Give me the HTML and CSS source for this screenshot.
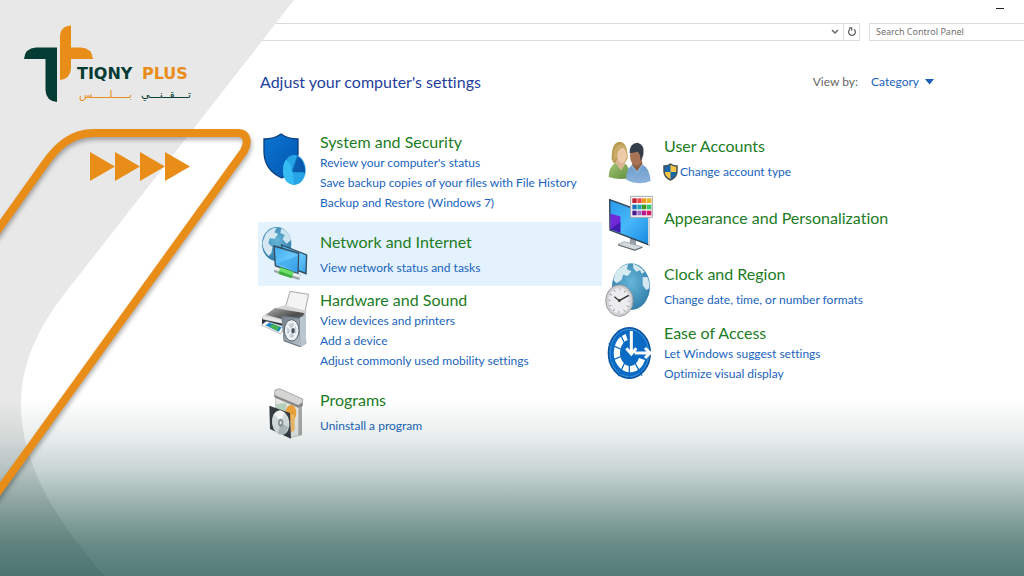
FILE: index.html
```html
<!DOCTYPE html>
<html lang="en">
<head>
<meta charset="utf-8">
<title>Control Panel</title>
<link rel="stylesheet" href="styles.css">
</head>
<body>
<div class="page">
  <header class="titlebar"><button class="minimize" aria-label="Minimize"></button></header>
  <div class="toolbar">
    <div class="address">
      <input class="address-input" type="text" aria-label="Address">
      <button class="tool" aria-label="Previous locations"><svg width="8" height="6" viewBox="0 0 8 6"><path d="M1 1l3 3 3-3" fill="none" stroke="#666" stroke-width="1.5"/></svg></button>
      <button class="tool tool-refresh" aria-label="Refresh"><svg width="10" height="10" viewBox="0 0 10 10"><path d="M7 2.2A3.4 3.4 0 1 1 3 2.2M2 1h2.6v2.8" fill="none" stroke="#666" stroke-width="1.3"/></svg></button>
    </div>
    <input class="search" type="search" placeholder="Search Control Panel" aria-label="Search Control Panel">
  </div>

  <main class="content">
    <div class="head">
      <h1 class="title">Adjust your computer's settings</h1>
      <div class="view">
        <label for="view">View by:</label>
        <span class="view-choice">
          <select id="view" class="view-select"><option>Category</option></select>
          <svg width="9" height="6" viewBox="0 0 9 6"><path d="M0 0h9L4.500 5.500z" fill="#1660b8"/></svg>
        </span>
      </div>
    </div>

    <div class="columns">
      <div class="column column-first">
        <section class="cell cell-tall">
          <svg class="icon" viewBox="0 0 150 180">
            <defs><linearGradient id="sh" x1="0" y1="0" x2="1" y2="1"><stop offset="0" stop-color="#0a74d2"/><stop offset="1" stop-color="#0457ae"/></linearGradient></defs>
            <path d="M69 9Q90 24 120 24V68Q118 120 71 141Q20 118 18 64V24Q48 24 69 9z" fill="url(#sh)" stroke="#0c3f80" stroke-width="4"/>
            <ellipse cx="109" cy="117" rx="34" ry="45" fill="#25a5e6"/>
            <path d="M84 86Q108 104 107 161Q75 158 75 117Q75 98 84 86z" fill="#35bdf3"/>
            <path d="M107 110L117 76Q140 86 142 126z" fill="#0757a8"/>
            <path d="M100 120L117 76L131 122z" fill="#1685d4"/>
            <path d="M103 124L117 80L138 124z" fill="#0a5cae"/>
          </svg>
          <div class="info">
            <h2 class="name"><a href="#system">System and Security</a></h2>
            <ul class="links">
              <li><a href="#status">Review your computer's status</a></li>
              <li><a href="#history">Save backup copies of your files with File History</a></li>
              <li><a href="#backup">Backup and Restore (Windows 7)</a></li>
            </ul>
          </div>
        </section>

        <section class="cell cell-active">
          <svg class="icon" viewBox="0 0 150 180">
            <defs>
              <radialGradient id="gl" cx=".5" cy=".4" r=".6"><stop offset="0" stop-color="#68b5da"/><stop offset="1" stop-color="#317fa9"/></radialGradient>
              <linearGradient id="scr" x1="0" y1="0" x2="1" y2="1"><stop offset="0" stop-color="#3fa9ee"/><stop offset=".55" stop-color="#68c8fb"/><stop offset="1" stop-color="#36a0e8"/></linearGradient>
            </defs>
            <ellipse cx="56" cy="60" rx="44" ry="51" fill="url(#gl)"/>
            <path d="M22 32Q35 12 56 11L49 25L60 30L50 44L35 43L31 58L43 69L40 88L32 96Q15 80 13 56z" fill="#d5e8f2"/>
            <path d="M70 13Q92 21 99 48L86 59L74 46L80 33L67 27z" fill="#cbe3ef"/>
            <path d="M71 63L146 93L144 149L76 122z" fill="url(#scr)" stroke="#344b5d" stroke-width="4"/>
            <path d="M48 66L122 88L120 149L52 125z" fill="url(#scr)" stroke="#344b5d" stroke-width="4"/>
            <path d="M55 119L118 96V143z" fill="#2d9ce4" opacity=".5"/>
            <path d="M50 136l76 24" stroke="#9aa5a8" stroke-width="17"/><path d="M50 133l76 24" stroke="#e9eeee" stroke-width="9"/>
            <path d="M65 140l39 13" stroke="#3fae40" stroke-width="21"/><path d="M65 136l39 13" stroke="#6ce06b" stroke-width="11"/>
          </svg>
          <div class="info info-loose">
            <h2 class="name"><a href="#network">Network and Internet</a></h2>
            <ul class="links"><li><a href="#tasks">View network status and tasks</a></li></ul>
          </div>
        </section>

        <section class="cell cell-tall">
          <svg class="icon" viewBox="0 0 150 180">
            <defs>
              <linearGradient id="metal" x1="0" y1="0" x2="1" y2="1"><stop offset="0" stop-color="#737f8b"/><stop offset="1" stop-color="#b5bfc8"/></linearGradient>
              <linearGradient id="top" x1="0" y1="0" x2="1" y2="1"><stop offset="0" stop-color="#b2b2b2"/><stop offset=".6" stop-color="#4a4a4c"/><stop offset="1" stop-color="#858588"/></linearGradient>
            </defs>
            <path d="M96 7L152 16L141 67L83 52z" fill="#f3f3f3" stroke="#a9a9a9" stroke-width="3"/>
            <path d="M15 80L54 57L78 49L146 67L139 100L75 128L12 104z" fill="#d4d4d5"/>
            <path d="M24 77L51 57L141 73L116 102z" fill="url(#top)"/>
            <path d="M12 84L88 103L81 127L12 106z" fill="#28333d"/>
            <path d="M13 80L92 99V108L13 91z" fill="#e9e9ea"/>
            <path d="M10 108L25 97L81 113L68 135z" fill="#f8faf9" stroke="#999" stroke-width="2"/>
            <path d="M22 109l12-8 37 14-9 13z" fill="#1884ca"/><path d="M34 112l13-6 18 8-8 11z" fill="#46b34b"/>
            <path d="M70 79L125 86L140 78L145 163L127 175L77 157z" fill="#66717c"/>
            <path d="M125 86L144 78V163L127 175z" fill="#b9c6d0"/>
            <path d="M71 82L123 89L127 171L77 154z" fill="url(#metal)"/>
            <ellipse cx="101" cy="124" rx="22" ry="32" fill="#edf1f3" stroke="#57626c" stroke-width="3"/>
            <ellipse cx="101" cy="124" rx="14" ry="22" fill="#c5ced5"/><path d="M89 110l24 30M113 105L90 142" stroke="#f5f7f8" stroke-width="5"/><ellipse cx="105" cy="125" rx="5" ry="8" fill="#45505b"/>
          </svg>
          <div class="info">
            <h2 class="name"><a href="#hardware">Hardware and Sound</a></h2>
            <ul class="links">
              <li><a href="#devices">View devices and printers</a></li>
              <li><a href="#add">Add a device</a></li>
              <li><a href="#mobility">Adjust commonly used mobility settings</a></li>
            </ul>
          </div>
        </section>

        <section class="cell">
          <svg class="icon" viewBox="0 0 150 180">
            <path d="M53 35L130 67V159L98 166L53 140z" fill="#e7e7e5" stroke="#b1b1af" stroke-width="2"/>
            <path d="M121 69L132 65V158L121 161z" fill="#aaa9a7"/>
            <path d="M51 24L65 20L134 51L133 72L120 73L49 43z" fill="#d5d5d4" stroke="#8b8b8b" stroke-width="2"/>
            <path d="M50 39L121 69L133 61V73L120 77L49 46z" fill="#8a8a8a"/>
            <path d="M52 67L85 62V103L56 96z" fill="#b9d2bf"/>
            <ellipse cx="99" cy="93" rx="16" ry="24" fill="#efa238"/><path d="M98 98V154L110 143V98z" fill="#f3ba65"/>
            <path d="M34 71L96 93L99 170L36 141z" fill="#363b40"/>
            <ellipse cx="68" cy="122" rx="26" ry="37" transform="rotate(-9 68 122)" fill="#dce0e2"/>
            <path d="M68 122L50 95L66 85L79 91z" fill="#fff"/><path d="M68 122L60 156L79 157L91 135z" fill="#b6bdc1"/>
            <ellipse cx="68" cy="122" rx="8" ry="12" fill="#8c979d"/><ellipse cx="68" cy="122" rx="3" ry="5" fill="#eee"/>
          </svg>
          <div class="info info-loose">
            <h2 class="name"><a href="#programs">Programs</a></h2>
            <ul class="links"><li><a href="#uninstall">Uninstall a program</a></li></ul>
          </div>
        </section>
      </div>

      <div class="column">
        <section class="cell">
          <svg class="icon" viewBox="0 0 150 180">
            <defs>
              <linearGradient id="gr" x1="0" y1="0" x2="1" y2="1"><stop offset="0" stop-color="#a4c673"/><stop offset="1" stop-color="#608d3d"/></linearGradient>
              <linearGradient id="bl" x1="0" y1="0" x2="0" y2="1"><stop offset="0" stop-color="#6a9bcb"/><stop offset="1" stop-color="#8db3dc"/></linearGradient>
            </defs>
            <path d="M29 94Q28 43 53 41Q77 43 77 91L68 106H35z" fill="#b99a51"/>
            <path d="M47 88h19l3 24-17 20-14-20z" fill="#dbb493"/>
            <ellipse cx="60" cy="80" rx="15" ry="25" fill="#edcaaa"/>
            <path d="M36 99Q29 55 57 49Q78 55 75 84Q71 62 63 59Q45 63 45 86z" fill="#c9ad67"/>
            <path d="M20 147Q20 116 40 105L57 127L70 107Q82 114 83 150Q51 158 20 147z" fill="url(#gr)"/>
            <path d="M93 100h27l3 20-18 17-17-20z" fill="#8a5e43"/>
            <ellipse cx="103" cy="83" rx="19" ry="30" fill="#a87354"/>
            <path d="M83 75Q82 45 107 44Q129 49 124 81L115 100Q117 77 106 71Q89 76 83 75z" fill="#333e48"/>
            <path d="M73 155Q71 124 90 112L105 133L121 110Q143 119 146 159Q107 174 73 155z" fill="url(#bl)"/>
            <path d="M89 112l16 21 16-22" fill="none" stroke="#8fb4da" stroke-width="4"/>
          </svg>
          <div class="info info-loose">
            <h2 class="name"><a href="#users">User Accounts</a></h2>
            <ul class="links"><li><a class="shielded" href="#account"><svg class="shield" viewBox="0 0 15 18"><path d="M7.500 1Q10 3 14 3V8Q14 14 7.500 17Q1 14 1 8V3Q5 3 7.500 1z" fill="#f6c647"/><path d="M7.500 1V9H1V3Q5 3 7.500 1zM7.500 9H14Q14 14 7.500 17z" fill="#1868ad"/><path d="M7.500 1Q10 3 14 3V8Q14 14 7.500 17Q1 14 1 8V3Q5 3 7.500 1z" fill="none" stroke="#44515a" stroke-width="1.500"/></svg>Change account type</a></li></ul>
          </div>
        </section>

        <section class="cell">
          <svg class="icon" viewBox="0 0 150 180">
            <defs><linearGradient id="desk" x1="0" y1="0" x2="1" y2="1"><stop offset="0" stop-color="#2798ec"/><stop offset=".5" stop-color="#48b7f8"/><stop offset="1" stop-color="#168ae2"/></linearGradient></defs>
            <path d="M85 132L102 140V160H82z" fill="#98a1aa"/><path d="M48 157L67 149L121 165L98 176z" fill="#d4d9dd" stroke="#8b949b" stroke-width="2"/><path d="M48 159L98 174L121 166" fill="none" stroke="#59636b" stroke-width="3"/>
            <path d="M23 23L140 66V158L24 114z" fill="url(#desk)" stroke="#34414e" stroke-width="4"/>
            <path d="M25 65L55 73V122L25 111z" fill="#7227d8"/><path d="M25 112L55 89V122z" fill="#421cb1"/>
            <path d="M138 66l5-1v92l-5 2z" fill="#d3dbe1"/>
            <path d="M86 13H151V76H86z" fill="#fafafa" stroke="#a8a8a8" stroke-width="3"/>
            <g stroke-width="14"><path d="M91 26h13" stroke="#bf1d30"/><path d="M106 26h13" stroke="#e84c4c"/><path d="M120 26h13" stroke="#ef981e"/><path d="M135 26h13" stroke="#e7b524"/><path d="M91 45h13" stroke="#1672ba"/><path d="M106 45h13" stroke="#22a5b4"/><path d="M120 45h13" stroke="#46951c"/><path d="M135 45h13" stroke="#36c774"/><path d="M91 63h13" stroke="#471c92"/><path d="M106 63h13" stroke="#9870c0"/><path d="M120 63h13" stroke="#bb168c"/><path d="M135 63h13" stroke="#d61b62"/></g>
          </svg>
          <div class="info info-single"><h2 class="name"><a href="#appearance">Appearance and Personalization</a></h2></div>
        </section>

        <section class="cell">
          <svg class="icon" viewBox="0 0 150 180">
            <ellipse cx="87" cy="92" rx="57" ry="70" fill="url(#gl)"/>
            <path d="M39 55Q52 30 78 24L75 40L88 46L77 60L64 56L58 73L43 82L34 72z" fill="#d7e9f1"/>
            <path d="M93 23Q117 31 128 48L119 53L114 43L103 47L94 37zM122 64l14-1q8 17 6 34l-9 5-11-14z" fill="#d5e8f1"/>
            <ellipse cx="52" cy="134" rx="41" ry="47" fill="#cfd0d2" stroke="#9c9fa2" stroke-width="3"/><ellipse cx="52" cy="134" rx="34" ry="40" fill="#ececee" stroke="#c4c6c8" stroke-width="2"/>
            <ellipse cx="52" cy="134" rx="29" ry="34" fill="none" stroke="#777" stroke-width="6" stroke-dasharray="2 14.500"/>
            <path d="M37 122L52 134L80 118" fill="none" stroke="#333" stroke-width="4"/><circle cx="52" cy="134" r="4" fill="#333"/>
          </svg>
          <div class="info info-loose">
            <h2 class="name"><a href="#clock">Clock and Region</a></h2>
            <ul class="links"><li><a href="#formats">Change date, time, or number formats</a></li></ul>
          </div>
        </section>

        <section class="cell cell-last">
          <svg class="icon" viewBox="0 0 150 180">
            <ellipse cx="82" cy="90" rx="63" ry="76" fill="#0b6bc4" stroke="#0b4f96" stroke-width="4"/><ellipse cx="82" cy="90" rx="58" ry="71" fill="none" stroke="#58a7e7" stroke-width="2"/>
            <path d="M74 42A39 49 0 1 0 120 108" fill="none" stroke="#fff" stroke-width="19"/>
            <path d="M82 90L49 22M82 90L20 62M82 90L20 116M82 90L49 160M82 90V164M82 90L120 158" stroke="#0b6bc4" stroke-width="4"/>
            <ellipse cx="82" cy="90" rx="27" ry="36" fill="#0b6bc4"/>
            <path d="M88 24V88M73 76L88 93L103 76M98 90H143M129 75L144 90L129 105" fill="none" stroke="#fff" stroke-width="9"/>
          </svg>
          <div class="info">
            <h2 class="name"><a href="#ease">Ease of Access</a></h2>
            <ul class="links">
              <li><a href="#suggest">Let Windows suggest settings</a></li>
              <li><a href="#display">Optimize visual display</a></li>
            </ul>
          </div>
        </section>
      </div>
    </div>
  </main>

  <svg class="swoosh" width="300" height="576" viewBox="0 0 300 576" aria-hidden="true"><path d="M0 0H294L73 283C36 328 21 365 21 405C21 455 47 512 105 576H0z" fill="#e8e8e8"/></svg>
  <div class="shade"></div>
  <svg class="brand" width="300" height="576" viewBox="0 0 300 576" role="img" aria-label="Tiqny Plus">
    <path class="ribbon" d="M-10 241L44 165C58 145 72 133 94 133H238C247 133 249 142 244 151L-10 503" fill="none" stroke="#e88d18" stroke-width="8"/>
    <path d="M90 152l25 14.500L90 181zM115 152l25 14.500L115 181zM140 152l25 14.500L140 181zM165 152l25 14.500L165 181z" fill="#e88d18"/>
    <path d="M24 59Q25 48 36 47.500H57V102Q46 101 45.500 90V59z" fill="#033c34"/>
    <path d="M60 80V37Q60 26 71 25.500V47.500H81Q92 48 93 59H71V69Q70 79 60 80z" fill="#e88d18"/>
    <text class="word" x="77" y="79" fill="#033c34">TIQNY</text>
    <text class="word" x="142" y="79" fill="#e88d18">PLUS</text>
    <text class="arabic" x="191" y="98" fill="#033c34" direction="rtl">تــــقــنـــي</text>
    <text class="arabic" x="132" y="98" fill="#e88d18" direction="rtl">بـــــلـــــس</text>
  </svg>
</div>
</body>
</html>
```

FILE: styles.css
```css
* { box-sizing: border-box; }
body {
  margin: 0;
  background: #fff;
  font-family: Lato, "Open Sans", sans-serif;
  font-size: 12px;
  font-variant-ligatures: none;
  line-height: 20px;
}
a { color: #1964bd; text-decoration: none; }
a:hover { text-decoration: underline; }
button, input, select { font: inherit; border: 0; padding: 0; background: none; }

.page {
  position: relative;
  display: flex;
  flex-direction: column;
  min-height: 100vh;
  overflow: hidden;
}
.titlebar { display: flex; justify-content: flex-end; height: 23px; padding-right: 20px; }
.minimize { width: 8px; height: 9px; border-bottom: 1px solid #222; }

.toolbar { display: flex; gap: 9px; }
.address { display: flex; flex: 1; border: 1px solid #dcdcdc; }
.address-input { flex: 1; min-width: 0; height: 16px; }
.tool { display: flex; align-items: center; justify-content: center; width: 16px; }
.tool-refresh { border-left: 1px solid #dcdcdc; }
.search {
  width: 155px;
  height: 18px;
  padding: 0 6px;
  border: 1px solid #dcdcdc;
  border-right: 0;
  font-family: "Noto Sans", sans-serif;
  font-size: 9px;
  appearance: none;
}
.search::placeholder { color: #707070; opacity: 1; }

.content { flex: 1; padding-left: 258px; }
.head {
  display: flex;
  align-items: center;
  justify-content: space-between;
  height: 85px;
  padding: 0 90px 4px 2px;
}
.title { margin: 0; color: #1f3f9c; font-size: 16px; font-weight: 400; }
.view { display: flex; gap: 13px; color: #666; }
.view-choice { display: flex; align-items: center; gap: 5px; }
.view-select { color: #1964bd; appearance: none; }

.columns { display: grid; grid-template-columns: 344px 1fr; }
.column { display: flex; flex-direction: column; }
.column-first { padding-top: 3px; }
.cell { display: flex; align-items: center; gap: 12px; padding: 2px 0; }
.cell-tall { align-items: flex-start; margin-bottom: 7px; }
.cell-active { margin-bottom: 1px; background: #e4f2fd; }
.cell-last { margin-top: 2px; }
.icon { flex: none; width: 50px; height: 60px; overflow: visible; }
.info-single { padding-bottom: 8px; }
.name { margin: 0; font-size: 16px; font-weight: 400; line-height: 22px; }
.name a { color: #1c7c24; }
.info-loose .name { margin-bottom: 5px; }
.links { margin: 0; padding: 0; list-style: none; }
.shielded { display: flex; align-items: center; gap: 2px; margin-left: -1px; }
.shield { width: 15px; height: 18px; }

.swoosh, .brand { position: absolute; top: 0; left: 0; pointer-events: none; }
.shade {
  position: absolute;
  right: 0;
  bottom: 0;
  left: 0;
  height: 176px;
  background: linear-gradient(rgba(0, 60, 52, 0), rgba(0, 60, 52, .1) 23%, rgba(0, 60, 52, .22) 40%, rgba(0, 60, 52, .38) 57%, rgba(0, 60, 52, .5) 70%, rgba(0, 60, 52, .6) 83%, rgba(0, 60, 52, .67));
  pointer-events: none;
}
.ribbon { filter: drop-shadow(1px 3px 2px rgba(0, 0, 0, .3)); }
.word { font: bold 16px "DejaVu Sans", sans-serif; }
.arabic { font: 11px "DejaVu Sans", sans-serif; }
```
